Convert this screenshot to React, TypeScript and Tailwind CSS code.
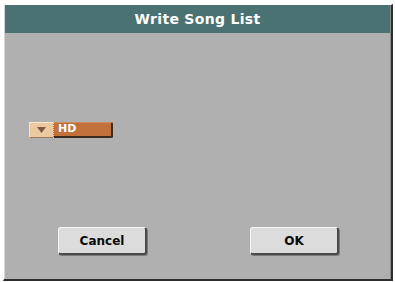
import React from "react";

const font = { fontFamily: '"DejaVu Sans", "Liberation Sans", sans-serif' };

function Btn({ label }: { label: string }) {
  return (
    <div
      className="w-[89px] h-[28px] flex items-center justify-center rounded-[3px] bg-[#dcdcdc] border-t border-l border-[#f4f4f4] border-r-2 border-b-2 border-r-[#4a4a4a] border-b-[#4a4a4a] shadow-[1px_1px_0_#7a7a7a] text-[12px] font-bold text-[#0a0a0a]"
      style={font}
    >
      {label}
    </div>
  );
}

export default function App() {
  return (
    <div className="w-[395px] h-[282px] bg-white pt-[4px] pl-[3px]" style={font}>
      <div className="w-[390px] h-[277px] flex flex-col bg-[#b0b0b0] border-t border-l border-white border-r-2 border-b-2 border-r-[#2e2e2e] border-b-[#2e2e2e]">
        <div className="flex flex-col flex-1 border-l border-[#d4d4d4] border-r border-r-[#8a8a8a]">
          <div className="h-[28px] bg-[#4b7272] flex items-center justify-center text-white text-[14px] font-bold tracking-[0.3px]">
            Write Song List
          </div>
          <div className="flex flex-col flex-1">
            <div className="mt-[89px] ml-[24px] flex h-[16px] w-[84px]">
              <div className="w-[24px] h-full bg-[#ecc9a0] border-t border-l border-[#f8e4cc] border-b border-b-[#9a7a5a] flex items-center justify-center">
                <svg width="9" height="6" viewBox="0 0 9 6">
                  <path d="M0 0 H9 L4.5 6 Z" fill="#7a5a44" />
                </svg>
              </div>
              <div className="w-px h-full border-l border-dotted border-[#f0c8a8] bg-[#c2713c]" />
              <div className="flex-1 h-full bg-[#c2713c] border-t border-t-[#d08a5a] border-r-2 border-b-2 border-r-[#3a2a20] border-b-[#3a2a20] rounded-r-[2px] flex items-center pl-[4px] text-white text-[11px] font-bold">
                HD
              </div>
            </div>
            <div className="mt-auto mb-[24px] flex justify-between pl-[53px] pr-[51px]">
              <Btn label="Cancel" />
              <Btn label="OK" />
            </div>
          </div>
        </div>
      </div>
    </div>
  );
}
